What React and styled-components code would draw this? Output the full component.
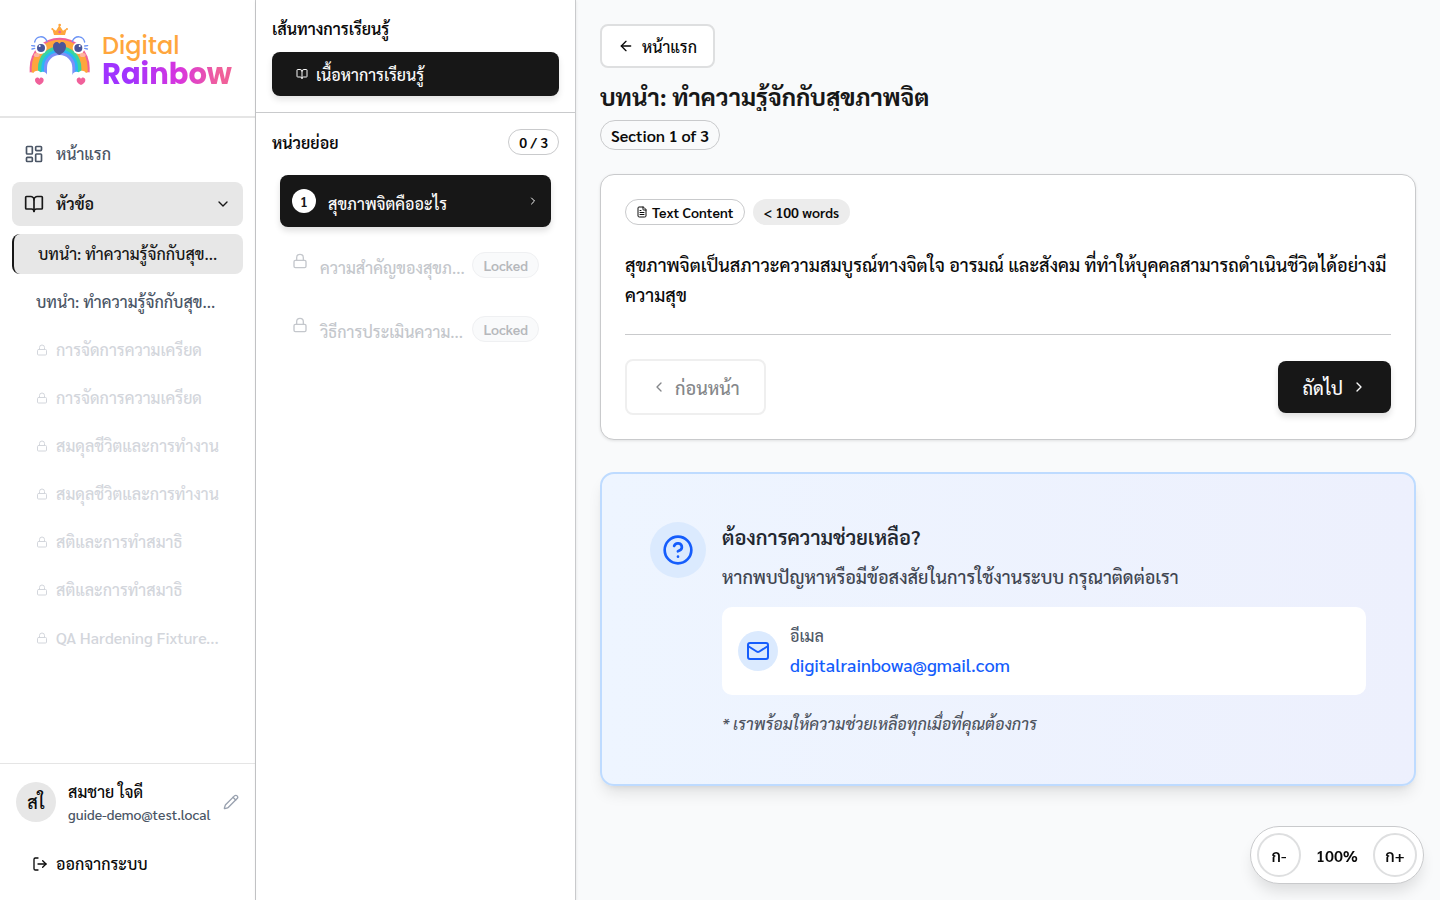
import React from 'react';
import styled, { createGlobalStyle, css } from 'styled-components';
import {
  ArrowLeft,
  BookOpen,
  ChevronDown,
  ChevronLeft,
  ChevronRight,
  CircleQuestionMark,
  FileText,
  LayoutDashboard,
  Lock,
  LogOut,
  Mail,
  Pencil,
} from 'lucide-react';

const GlobalStyle = createGlobalStyle`
  * { box-sizing: border-box; }
  body {
    margin: 0;
    background: #f9fafb;
    color: #0a0a0a;
    font-family: Sarabun, "Noto Sans Thai Looped", "Noto Sans Thai", "Noto Sans", sans-serif;
    font-size: 16px;
    line-height: 24px;
  }
  h1, h2, h3, p, ul { margin: 0; padding: 0; }
  ul { list-style: none; }
  button { font: inherit; color: inherit; cursor: pointer; }
  button:disabled { cursor: default; }
  a { text-decoration: none; color: inherit; }
  svg { flex-shrink: 0; }
`;

const Layout = styled.div`
  display: grid;
  grid-template-columns: 256px 320px minmax(0, 1fr);
  min-height: 100vh;
`;

const Sidebar = styled.aside`
  display: flex;
  flex-direction: column;
  background: #fff;
  border-right: 1px solid #c9cacc;
`;

const Brand = styled.a`
  display: flex;
  align-items: center;
  gap: 6px;
  height: 118px;
  padding: 0 24px 6px;
  border-bottom: 2px solid #e5e5e5;
`;

const BrandName = styled.span`
  display: flex;
  flex-direction: column;
  padding-top: 10px;
  font-family: Poppins, Inter, sans-serif;
  line-height: 28px;
`;

const BrandTop = styled.span`
  font-size: 24px;
  font-weight: 500;
  color: #ffa63d;
`;

const BrandBottom = styled.span`
  font-size: 29px;
  font-weight: 700;
  color: transparent;
  background: linear-gradient(90deg, #a033ff 20%, #d936dd 60%, #f0609a 90%);
  background-clip: text;
`;

const Nav = styled.nav`
  flex: 1;
  padding: 14px 12px;
`;

const NavItem = styled.button`
  display: flex;
  align-items: center;
  gap: 12px;
  width: 100%;
  height: 44px;
  margin-bottom: 6px;
  padding: 0 12px;
  border: 0;
  border-radius: 8px;
  text-align: left;
  font-weight: ${(p) => (p.$active ? 600 : 500)};
  color: ${(p) => (p.$active ? '#171717' : '#4a5565')};
  background: ${(p) => (p.$active ? '#e7e7e7' : 'transparent')};
`;

const NavLabel = styled.span`
  flex: 1;
`;

const TopicList = styled.ul`
  display: flex;
  flex-direction: column;
  gap: 8px;
  padding-top: 2px;
`;

const Topic = styled.button`
  display: flex;
  align-items: center;
  gap: 8px;
  width: 100%;
  height: 40px;
  padding: 0 24px;
  border: 0;
  border-radius: 8px;
  background: transparent;
  font-weight: 500;
  white-space: nowrap;
  color: #4a5565;
  ${(p) =>
    p.$active &&
    css`
      border-left: 2px solid #171717;
      background: #e7e7e7;
      color: #171717;
    `}
  &:disabled {
    color: #d3d6dc;
  }
`;

const Account = styled.footer`
  display: flex;
  flex-direction: column;
  gap: 18px;
  padding: 16px 16px 14px;
  border-top: 1px solid #e5e5e5;
`;

const Profile = styled.div`
  display: flex;
  align-items: center;
  gap: 12px;
`;

const Avatar = styled.span`
  display: grid;
  place-items: center;
  width: 40px;
  height: 40px;
  border-radius: 50%;
  background: #e7e7e7;
  font-size: 18px;
  font-weight: 500;
`;

const ProfileText = styled.div`
  flex: 1;
  white-space: nowrap;
`;

const ProfileName = styled.p`
  font-weight: 500;
`;

const ProfileMail = styled.p`
  font-size: 14px;
  font-weight: 500;
  line-height: 20px;
  color: #4a5565;
`;

const IconButton = styled.button`
  display: flex;
  padding: 0;
  border: 0;
  background: none;
  color: #99a1af;
`;

const Logout = styled.button`
  display: flex;
  align-items: center;
  gap: 8px;
  height: 44px;
  padding: 0 16px;
  border: 0;
  background: none;
  font-weight: 500;
`;

const Lessons = styled.section`
  background: #fff;
  border-right: 1px solid #c9cacc;
  box-shadow: 0 1px 3px rgba(0, 0, 0, 0.1);
`;

const PathHeader = styled.div`
  display: flex;
  flex-direction: column;
  gap: 11px;
  padding: 17px 16px 16px;
  border-bottom: 1px solid #c9cacc;
`;

const PanelTitle = styled.h2`
  font-size: 16px;
  font-weight: 600;
  line-height: 24px;
`;

const PathButton = styled.button`
  display: flex;
  align-items: center;
  gap: 8px;
  height: 44px;
  padding: 0 24px;
  border: 0;
  border-radius: 8px;
  background: #171717;
  color: #fafafa;
  font-weight: 500;
  line-height: 25px;
  box-shadow: 0 4px 6px rgba(0, 0, 0, 0.1);
`;

const UnitHeader = styled.div`
  display: flex;
  align-items: flex-end;
  justify-content: space-between;
  padding: 16px 16px 20px;
`;

const Badge = styled.span`
  display: inline-flex;
  align-items: center;
  gap: 4px;
  height: ${(p) => (p.$large ? '30px' : '26px')};
  padding: 0 10px;
  border: 1px solid ${(p) => (p.$filled ? 'transparent' : '#c9cacc')};
  border-radius: 16px;
  background: ${(p) => (p.$filled ? '#ececec' : 'transparent')};
  font-size: ${(p) => (p.$large ? '16px' : '14px')};
  font-weight: 600;
  line-height: ${(p) => (p.$large ? '25px' : '24px')};
  white-space: nowrap;
`;

const UnitList = styled.ul`
  display: flex;
  flex-direction: column;
  gap: 12px;
  padding: 0 24px;
`;

const Unit = styled.button`
  display: flex;
  align-items: flex-start;
  gap: 12px;
  width: 100%;
  height: 52px;
  padding: 14px 12px;
  border: 0;
  border-radius: 8px;
  text-align: left;
  white-space: nowrap;
  font-weight: 500;
  background: ${(p) => (p.$active ? '#171717' : 'transparent')};
  color: ${(p) => (p.$active ? '#fafafa' : '#0a0a0a')};
  box-shadow: ${(p) => (p.$active ? '0 4px 6px rgba(0, 0, 0, 0.12)' : 'none')};
  &:disabled {
    color: #c4c7cc;
  }
`;

const UnitNumber = styled.span`
  display: grid;
  place-items: center;
  width: 24px;
  height: 24px;
  border-radius: 50%;
  background: #fff;
  color: #171717;
  font-size: 14px;
  font-weight: 600;
`;

const UnitBody = styled.span`
  display: flex;
  flex: 1;
  align-items: center;
  gap: 8px;
  min-width: 0;
  height: 24px;
`;

const UnitTitle = styled.span`
  flex: 1;
  min-width: 0;
  padding-top: 6px;
`;

const LockedBadge = styled(Badge)`
  border-color: #eff0f2;
  background: #f9fafb;
  color: #b6b8bc;
`;

const Main = styled.main`
  padding: 24px;
`;

const Heading = styled.header`
  display: flex;
  flex-direction: column;
  align-items: flex-start;
  margin-bottom: 24px;
`;

const Button = styled.button`
  display: flex;
  align-items: center;
  gap: 8px;
  height: 44px;
  padding: 0 16px;
  border: 2px solid #dedfe0;
  border-radius: 8px;
  background: #fff;
  font-weight: 500;
  line-height: 25px;
  &:disabled {
    border-color: #efefef;
    color: #85878a;
  }
`;

const PreviousButton = styled(Button)`
  height: 56px;
  padding: 0 24px;
  font-size: 18px;
`;

const NextButton = styled(Button)`
  height: 52px;
  padding: 0 24px;
  border: 0;
  background: #171717;
  color: #fafafa;
  font-size: 18px;
  box-shadow: 0 4px 6px rgba(0, 0, 0, 0.12);
`;

const Title = styled.h1`
  overflow: hidden;
  margin: 13px 0 9px;
  font-size: 24px;
  font-weight: 700;
  line-height: 30px;
  color: #171717;
`;

const Card = styled.article`
  padding: 24px;
  border: 1px solid #c9cacc;
  border-radius: 14px;
  background: #fff;
  box-shadow: 0 1px 3px rgba(0, 0, 0, 0.1);
`;

const BadgeRow = styled.div`
  display: flex;
  gap: 8px;
`;

const LessonText = styled.p`
  padding: 25px 0 24px;
  border-bottom: 1px solid #c9cacc;
  font-size: 18px;
  font-weight: 500;
  line-height: 30px;
`;

const Pager = styled.div`
  display: flex;
  align-items: center;
  justify-content: space-between;
  padding-top: 24px;
`;

const Help = styled.section`
  display: flex;
  align-items: flex-start;
  gap: 16px;
  margin-top: 32px;
  padding: 48px;
  border: 2px solid #bedbff;
  border-radius: 14px;
  background: linear-gradient(to right, #eef5ff, #edf0fd);
  box-shadow: 0 10px 15px -3px rgba(0, 0, 0, 0.1), 0 4px 6px -4px rgba(0, 0, 0, 0.1);
`;

const RoundIcon = styled.span`
  display: grid;
  flex-shrink: 0;
  place-items: center;
  width: ${(p) => p.$size}px;
  height: ${(p) => p.$size}px;
  border-radius: 50%;
  background: #dbeafe;
  color: #155dfc;
`;

const HelpBody = styled.div`
  flex: 1;
`;

const HelpTitle = styled.h3`
  margin-bottom: 10px;
  font-size: 20px;
  font-weight: 600;
  line-height: 30px;
  color: #22272f;
`;

const HelpText = styled.p`
  font-size: 18px;
  font-weight: 500;
  line-height: 30px;
  color: #3f4550;
`;

const ContactBox = styled.div`
  display: flex;
  align-items: center;
  gap: 12px;
  margin: 15px 0 16px;
  padding: 15px 16px;
  border-radius: 10px;
  background: #fff;
`;

const ContactLabel = styled.p`
  font-weight: 500;
  line-height: 28px;
  color: #4f5866;
`;

const ContactLink = styled.a`
  display: block;
  font-size: 18px;
  font-weight: 500;
  line-height: 30px;
  color: #155dfc;
`;

const HelpNote = styled.p`
  font-weight: 500;
  line-height: 25px;
  font-style: italic;
  color: #4f5560;
`;

const TextSize = styled.div`
  position: fixed;
  right: 16px;
  bottom: 16px;
  display: flex;
  align-items: center;
  padding: 6px;
  border: 1px solid #c9cacc;
  border-radius: 32px;
  background: #fff;
  font-weight: 600;
  line-height: 25px;
  box-shadow: 0 10px 15px -3px rgba(0, 0, 0, 0.12);
`;

const SizeButton = styled.button`
  width: 44px;
  height: 44px;
  padding: 0;
  border: 2px solid #dedfe0;
  border-radius: 50%;
  background: #fff;
`;

const SizeValue = styled.output`
  width: 72px;
  text-align: center;
`;

function RainbowMascot() {
  return (
    <svg width="72" height="70" viewBox="0 0 216 210" fill="none" aria-hidden="true">
      <path d="M17 164V143a90 90 0 0 1 180 0v21z" fill="#f0609a" />
      <path d="M23 164V143a84 84 0 0 1 168 0v21z" fill="#ffa63d" />
      <path d="M42 164V143a65 65 0 0 1 130 0v21z" fill="#38d3a0" />
      <path d="M52 164V143a55 55 0 0 1 110 0v21z" fill="#29b6f6" />
      <path d="M60 164V143a47 47 0 0 1 94 0v21z" fill="#7b90f8" />
      <path d="M69 168V143a38 38 0 0 1 76 0v25z" fill="#fff" />
      <path d="M10 172v-10c5-6 12-7 18-3 5-9 17-9 22-2 8-4 17 0 20 9v8zM204 172v-10c-5-6-12-7-18-3-5-9-17-9-22-2-8-4-17 0-20 9v8z" fill="#fff" />
      <ellipse cx="38" cy="105" rx="9" ry="6" fill="#ffb3a0" />
      <ellipse cx="176" cy="105" rx="9" ry="6" fill="#ffb3a0" />
      <circle cx="50" cy="84" r="18" fill="#fff" />
      <circle cx="164" cy="84" r="18" fill="#fff" />
      <circle cx="51" cy="84" r="12" fill="#4a5599" />
      <circle cx="163" cy="84" r="12" fill="#4a5599" />
      <circle cx="47" cy="78" r="3" fill="#fff" />
      <circle cx="167" cy="78" r="3" fill="#fff" />
      <path
        d="M32 66C36 47 60 44 69 64M182 66C178 47 154 44 145 64M23 77l9 1M24 87l8-2M191 77l-9 1M190 87l-8-2"
        stroke="#6b93f5"
        strokeWidth="4"
        strokeLinecap="round"
      />
      <path d="M106 105C94 99 87 92 87 79c0-13 14-18 19-8 6-10 20-5 20 8 0 13-8 20-20 26Z" fill="#4a5599" />
      <path d="M90 45 84 25l12 7 10-16 11 16 12-7-6 20Z" fill="#ffa63d" />
      <circle cx="107" cy="15" r="4" fill="#ffa63d" />
      <circle cx="85" cy="27" r="3" fill="#ffa63d" />
      <circle cx="129" cy="27" r="3" fill="#ffa63d" />
      <circle cx="107" cy="36" r="4" fill="#f0609a" />
      <path
        d="M46 195c-9-4-13-9-13-15 0-8 10-10 13-3 3-7 13-5 13 3 0 6-4 11-13 15ZM171 195c-9-4-13-9-13-15 0-8 10-10 13-3 3-7 13-5 13 3 0 6-4 11-13 15Z"
        fill="#f0609a"
      />
    </svg>
  );
}

const topics = [
  { title: 'บทนำ: ทำความรู้จักกับสุข...', active: true },
  { title: 'บทนำ: ทำความรู้จักกับสุข...' },
  { title: 'การจัดการความเครียด', locked: true },
  { title: 'การจัดการความเครียด', locked: true },
  { title: 'สมดุลชีวิตและการทำงาน', locked: true },
  { title: 'สมดุลชีวิตและการทำงาน', locked: true },
  { title: 'สติและการทำสมาธิ', locked: true },
  { title: 'สติและการทำสมาธิ', locked: true },
  { title: 'QA Hardening Fixture...', locked: true },
];

const lockedUnits = ['ความสำคัญของสุขภ...', 'วิธีการประเมินความ...'];

export default function App() {
  return (
    <>
      <GlobalStyle />
      <Layout>
        <Sidebar>
          <Brand href="#">
            <RainbowMascot />
            <BrandName>
              <BrandTop>Digital</BrandTop>
              <BrandBottom>Rainbow</BrandBottom>
            </BrandName>
          </Brand>
          <Nav>
            <NavItem>
              <LayoutDashboard size={20} />
              <NavLabel>หน้าแรก</NavLabel>
            </NavItem>
            <NavItem $active>
              <BookOpen size={20} />
              <NavLabel>หัวข้อ</NavLabel>
              <ChevronDown size={16} />
            </NavItem>
            <TopicList>
              {topics.map((topic, i) => (
                <li key={i}>
                  <Topic $active={topic.active} disabled={topic.locked}>
                    {topic.locked && <Lock size={12} />}
                    {topic.title}
                  </Topic>
                </li>
              ))}
            </TopicList>
          </Nav>
          <Account>
            <Profile>
              <Avatar>สใ</Avatar>
              <ProfileText>
                <ProfileName>สมชาย ใจดี</ProfileName>
                <ProfileMail>guide-demo@test.local</ProfileMail>
              </ProfileText>
              <IconButton aria-label="แก้ไขโปรไฟล์">
                <Pencil size={16} />
              </IconButton>
            </Profile>
            <Logout>
              <LogOut size={16} />
              ออกจากระบบ
            </Logout>
          </Account>
        </Sidebar>

        <Lessons>
          <PathHeader>
            <PanelTitle>เส้นทางการเรียนรู้</PanelTitle>
            <PathButton>
              <BookOpen size={12} />
              เนื้อหาการเรียนรู้
            </PathButton>
          </PathHeader>
          <UnitHeader>
            <PanelTitle>หน่วยย่อย</PanelTitle>
            <Badge>0 / 3</Badge>
          </UnitHeader>
          <UnitList>
            <li>
              <Unit $active>
                <UnitNumber>1</UnitNumber>
                <UnitBody>
                  <UnitTitle>สุขภาพจิตคืออะไร</UnitTitle>
                  <ChevronRight size={12} />
                </UnitBody>
              </Unit>
            </li>
            {lockedUnits.map((title) => (
              <li key={title}>
                <Unit disabled>
                  <Lock size={16} />
                  <UnitBody>
                    <UnitTitle>{title}</UnitTitle>
                    <LockedBadge>Locked</LockedBadge>
                  </UnitBody>
                </Unit>
              </li>
            ))}
          </UnitList>
        </Lessons>

        <Main>
          <Heading>
            <Button>
              <ArrowLeft size={16} />
              หน้าแรก
            </Button>
            <Title>บทนำ: ทำความรู้จักกับสุขภาพจิต</Title>
            <Badge $large>Section 1 of 3</Badge>
          </Heading>
          <Card>
            <BadgeRow>
              <Badge>
                <FileText size={12} />
                Text Content
              </Badge>
              <Badge $filled>&lt; 100 words</Badge>
            </BadgeRow>
            <LessonText>
              สุขภาพจิตเป็นสภาวะความสมบูรณ์ทางจิตใจ อารมณ์ และสังคม ที่ทำให้บุคคลสามารถดำเนินชีวิตได้อย่างมีความสุข
            </LessonText>
            <Pager>
              <PreviousButton disabled>
                <ChevronLeft size={16} />
                ก่อนหน้า
              </PreviousButton>
              <NextButton>
                ถัดไป
                <ChevronRight size={16} />
              </NextButton>
            </Pager>
          </Card>
          <Help>
            <RoundIcon $size={56}>
              <CircleQuestionMark size={32} />
            </RoundIcon>
            <HelpBody>
              <HelpTitle>ต้องการความช่วยเหลือ?</HelpTitle>
              <HelpText>หากพบปัญหาหรือมีข้อสงสัยในการใช้งานระบบ กรุณาติดต่อเรา</HelpText>
              <ContactBox>
                <RoundIcon $size={40}>
                  <Mail size={24} />
                </RoundIcon>
                <div>
                  <ContactLabel>อีเมล</ContactLabel>
                  <ContactLink href="mailto:digitalrainbowa@gmail.com">digitalrainbowa@gmail.com</ContactLink>
                </div>
              </ContactBox>
              <HelpNote>* เราพร้อมให้ความช่วยเหลือทุกเมื่อที่คุณต้องการ</HelpNote>
            </HelpBody>
          </Help>
        </Main>
      </Layout>
      <TextSize>
        <SizeButton>ก-</SizeButton>
        <SizeValue>100%</SizeValue>
        <SizeButton>ก+</SizeButton>
      </TextSize>
    </>
  );
}
